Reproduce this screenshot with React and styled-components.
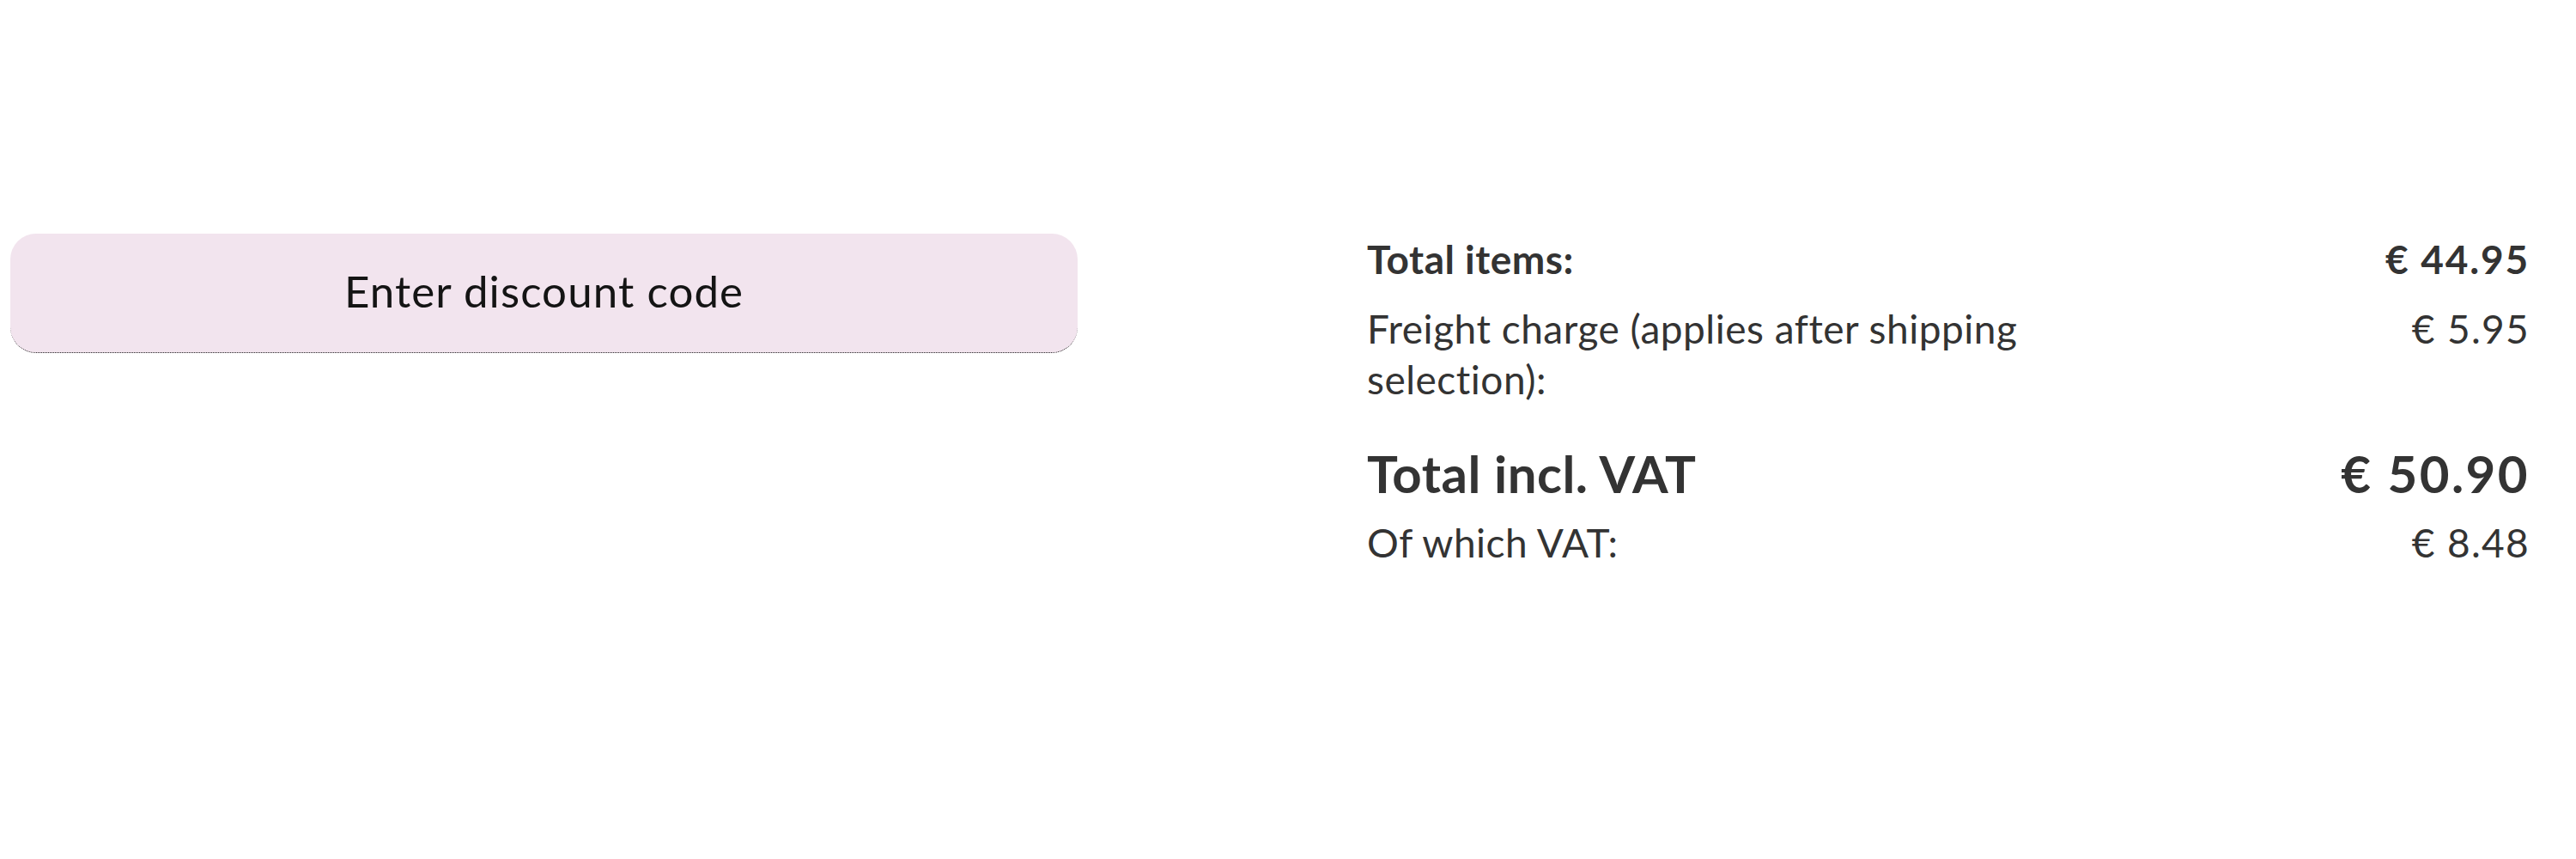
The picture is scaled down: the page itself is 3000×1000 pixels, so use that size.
import React from "react";
import styled, { createGlobalStyle } from "styled-components";

const Global = createGlobalStyle`
  html, body { margin: 0; padding: 0; background: #ffffff; }
  body { font-family: Lato, "Open Sans", sans-serif; }
`;

const Page = styled.div`
  display: grid;
  grid-template-columns: 1243px 1354px;
  column-gap: 337px;
  align-items: start;
  padding: 272px 54px 0 12px;
  min-height: 1000px;
  box-sizing: border-box;
`;

const DiscountButton = styled.button`
  display: flex;
  align-items: center;
  justify-content: center;
  width: 100%;
  height: 139px;
  padding: 0 0 6px;
  background: #f2e4ee;
  border: 0;
  border-bottom: 1.5px dotted #222222;
  border-radius: 30px;
  font-family: Lato, sans-serif;
  font-size: 51px;
  letter-spacing: 1.1px;
  font-weight: 400;
  color: #141414;
  cursor: pointer;
`;

const Summary = styled.div`
  display: flex;
  flex-direction: column;
  color: #333333;
`;

const Label = styled.span`
  max-width: 62%;
`;

const Value = styled.span`
  white-space: nowrap;
  text-align: right;
`;

const Row = styled.div`
  display: flex;
  justify-content: space-between;
  align-items: flex-start;
  margin-top: ${(p) => p.$space || 0}px;
  font-size: ${(p) => (p.$big ? 60 : 46)}px;
  line-height: ${(p) => (p.$big ? 70 : 59)}px;
  font-weight: ${(p) => (p.$bold ? 700 : 400)};

  ${Label} {
    letter-spacing: 0.5px;
  }

  ${Value} {
    letter-spacing: ${(p) => (p.$big ? 2.4 : p.$bold ? 1.8 : 1.3)}px;
  }
`;

export default function App() {
  return (
    <>
      <Global />
      <Page>
        <DiscountButton type="button">Enter discount code</DiscountButton>
        <Summary>
          <Row $bold>
            <Label>Total items:</Label>
            <Value>€ 44.95</Value>
          </Row>
          <Row $space={22}>
            <Label>Freight charge (applies after shipping selection):</Label>
            <Value>€ 5.95</Value>
          </Row>
          <Row $bold $big $space={45}>
            <Label>Total incl. VAT</Label>
            <Value>€ 50.90</Value>
          </Row>
          <Row $space={16}>
            <Label>Of which VAT:</Label>
            <Value>€ 8.48</Value>
          </Row>
        </Summary>
      </Page>
    </>
  );
}
